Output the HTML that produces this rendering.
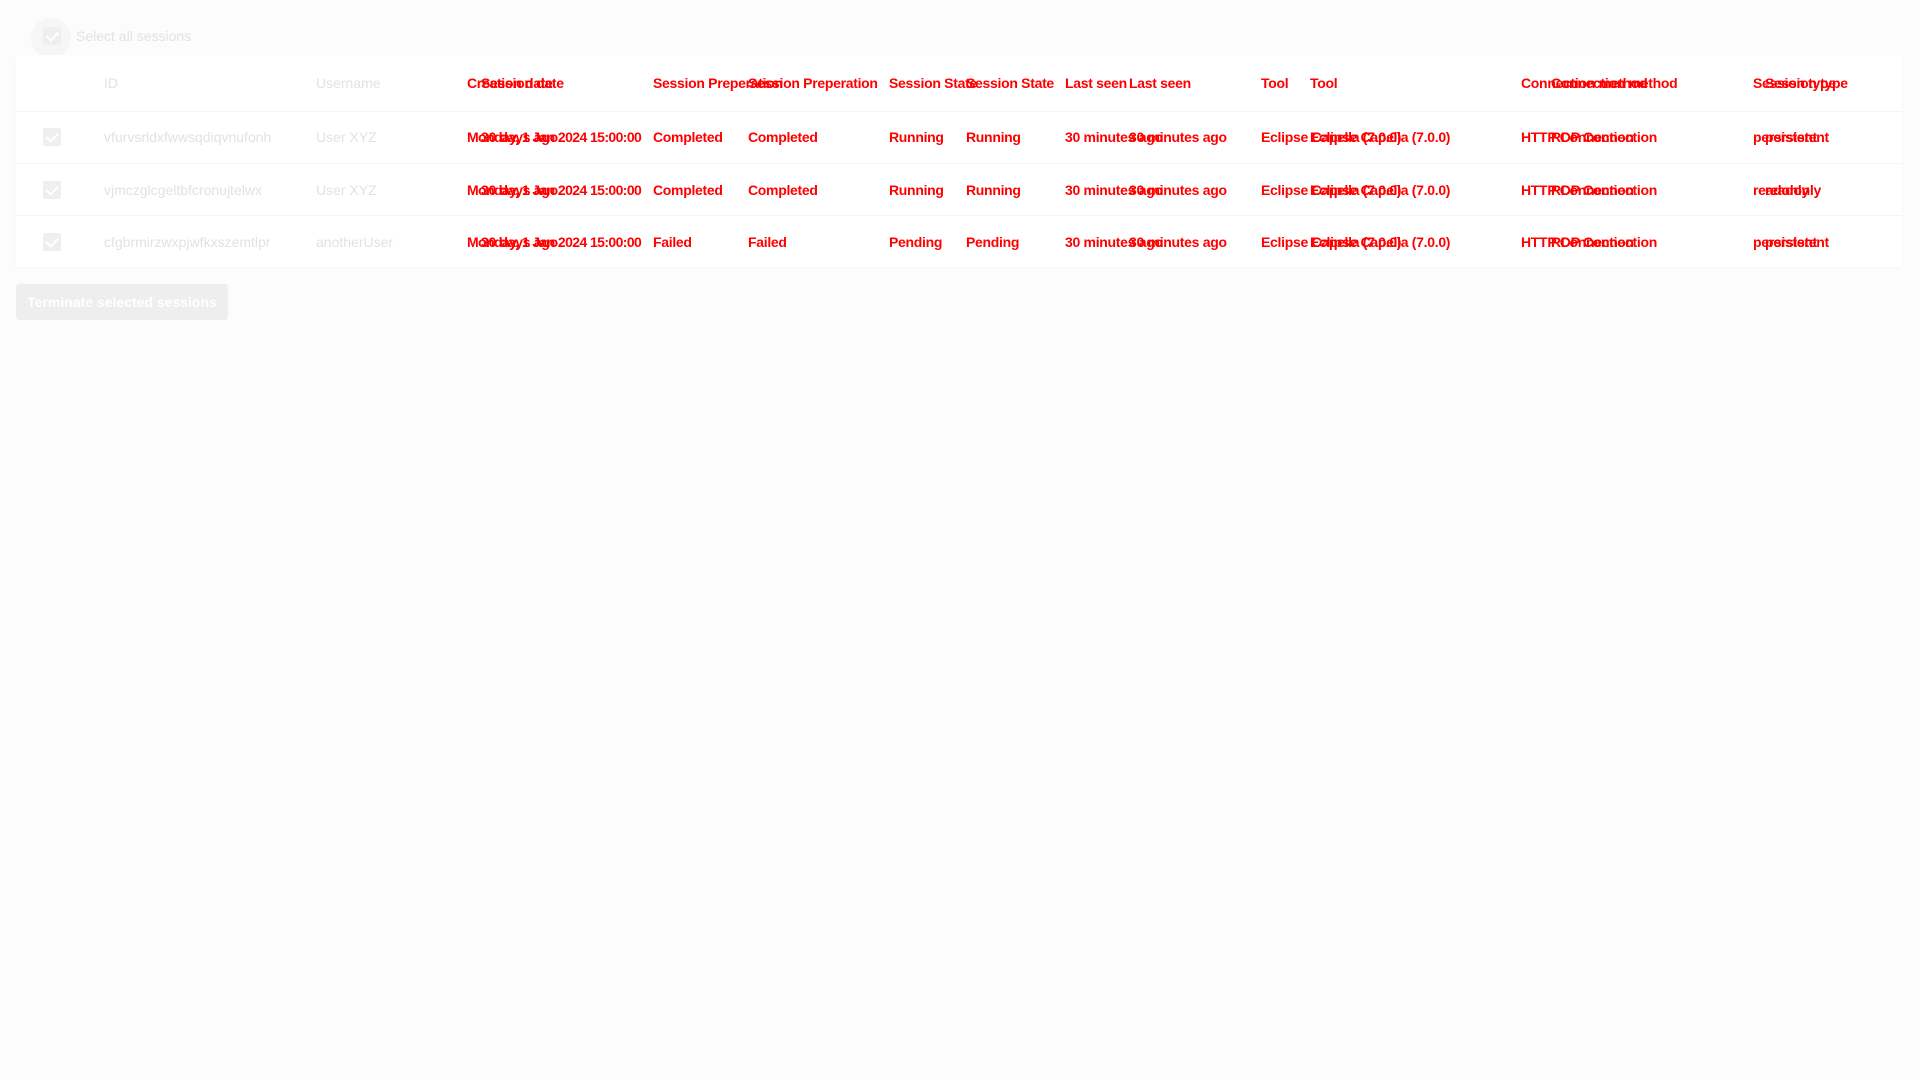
<!DOCTYPE html>
<html><head><meta charset="utf-8"><style>
html,body{margin:0;padding:0;width:1920px;height:1080px;background:#fcfcfc;overflow:hidden;font-family:"Liberation Sans",sans-serif;}
.a{position:absolute;white-space:nowrap;line-height:16px;}
.g{color:#e2e2e2;font-size:14px;}
.r{color:#ff0000;font-size:14px;font-weight:bold;letter-spacing:-0.3px;}
.d{letter-spacing:-0.6px;}
.card{position:absolute;left:16px;top:55px;width:1886px;height:212px;background:#fff;box-shadow:0 2px 4px rgba(0,0,0,0.025);}
.sep{position:absolute;left:16px;width:1886px;height:1px;background:#f5f5f5;}
.cb{position:absolute;left:43px;width:18px;height:18px;border-radius:2px;background:#efefef;}
.cb:after{content:"";position:absolute;left:6px;top:2px;width:5px;height:10px;border:solid #fff;border-width:0 2px 2px 0;transform:rotate(45deg);}
.btn{position:absolute;left:16px;top:284px;width:212px;height:36px;background:#eeeeee;border-radius:3px;color:#fff;font-size:14px;line-height:36px;text-align:center;font-weight:bold;}
</style></head><body>
<div class="a" style="left:31px;top:18px;width:40px;height:40px;border-radius:50%;background:#f6f6f6;"></div>
<div class="cb" style="top:27px"></div>
<div class="a g" style="left:76px;top:28px;">Select all sessions</div>
<div class="card"></div>
<div class="sep" style="top:111px"></div>
<div class="sep" style="top:163px"></div>
<div class="sep" style="top:215px"></div>

<div class="a g" style="left:104px;top:75px;">ID</div>
<div class="a g" style="left:316px;top:75px;">Username</div>
<div class="a r" style="left:467px;top:75px;">Creation date</div>
<div class="a r" style="left:481px;top:75px;">Session date</div>
<div class="a r" style="left:653px;top:75px;">Session Preperation</div>
<div class="a r" style="left:748px;top:75px;">Session Preperation</div>
<div class="a r" style="left:889px;top:75px;">Session State</div>
<div class="a r" style="left:966px;top:75px;">Session State</div>
<div class="a r" style="left:1065px;top:75px;">Last seen</div>
<div class="a r" style="left:1129px;top:75px;">Last seen</div>
<div class="a r" style="left:1261px;top:75px;">Tool</div>
<div class="a r" style="left:1310px;top:75px;">Tool</div>
<div class="a r" style="left:1521px;top:75px;">Connection method</div>
<div class="a r" style="left:1551px;top:75px;">Connection method</div>
<div class="a r" style="left:1753px;top:75px;">Session type</div>
<div class="a r" style="left:1765px;top:75px;">Session type</div>

<div class="cb" style="top:128px"></div>
<div class="a g" style="left:104px;top:129px;">vfurvsrldxfwwsqdiqvnufonh</div>
<div class="a g" style="left:316px;top:129px;">User XYZ</div>
<div class="a r d" style="left:467px;top:129px;">Monday, 1 Jan 2024 15:00:00</div>
<div class="a r" style="left:481px;top:129px;">30 days ago</div>
<div class="a r" style="left:653px;top:129px;">Completed</div>
<div class="a r" style="left:748px;top:129px;">Completed</div>
<div class="a r" style="left:889px;top:129px;">Running</div>
<div class="a r" style="left:966px;top:129px;">Running</div>
<div class="a r" style="left:1065px;top:129px;">30 minutes ago</div>
<div class="a r" style="left:1129px;top:129px;">30 minutes ago</div>
<div class="a r" style="left:1261px;top:129px;">Eclipse Capella (7.0.0)</div>
<div class="a r" style="left:1310px;top:129px;">Eclipse Capella (7.0.0)</div>
<div class="a r" style="left:1521px;top:129px;">HTTP Connection</div>
<div class="a r" style="left:1551px;top:129px;">RDP Connection</div>
<div class="a r" style="left:1753px;top:129px;">persistent</div>
<div class="a r" style="left:1765px;top:129px;">persistent</div>

<div class="cb" style="top:181px"></div>
<div class="a g" style="left:104px;top:182px;">vjmczglcgeltbfcronujtelwx</div>
<div class="a g" style="left:316px;top:182px;">User XYZ</div>
<div class="a r d" style="left:467px;top:182px;">Monday, 1 Jan 2024 15:00:00</div>
<div class="a r" style="left:481px;top:182px;">30 days ago</div>
<div class="a r" style="left:653px;top:182px;">Completed</div>
<div class="a r" style="left:748px;top:182px;">Completed</div>
<div class="a r" style="left:889px;top:182px;">Running</div>
<div class="a r" style="left:966px;top:182px;">Running</div>
<div class="a r" style="left:1065px;top:182px;">30 minutes ago</div>
<div class="a r" style="left:1129px;top:182px;">30 minutes ago</div>
<div class="a r" style="left:1261px;top:182px;">Eclipse Capella (7.0.0)</div>
<div class="a r" style="left:1310px;top:182px;">Eclipse Capella (7.0.0)</div>
<div class="a r" style="left:1521px;top:182px;">HTTP Connection</div>
<div class="a r" style="left:1551px;top:182px;">RDP Connection</div>
<div class="a r" style="left:1753px;top:182px;">readonly</div>
<div class="a r" style="left:1765px;top:182px;">readonly</div>

<div class="cb" style="top:233px"></div>
<div class="a g" style="left:104px;top:234px;">cfgbrmirzwxpjwfkxszemtlpr</div>
<div class="a g" style="left:316px;top:234px;">anotherUser</div>
<div class="a r d" style="left:467px;top:234px;">Monday, 1 Jan 2024 15:00:00</div>
<div class="a r" style="left:481px;top:234px;">30 days ago</div>
<div class="a r" style="left:653px;top:234px;">Failed</div>
<div class="a r" style="left:748px;top:234px;">Failed</div>
<div class="a r" style="left:889px;top:234px;">Pending</div>
<div class="a r" style="left:966px;top:234px;">Pending</div>
<div class="a r" style="left:1065px;top:234px;">30 minutes ago</div>
<div class="a r" style="left:1129px;top:234px;">30 minutes ago</div>
<div class="a r" style="left:1261px;top:234px;">Eclipse Capella (7.0.0)</div>
<div class="a r" style="left:1310px;top:234px;">Eclipse Capella (7.0.0)</div>
<div class="a r" style="left:1521px;top:234px;">HTTP Connection</div>
<div class="a r" style="left:1551px;top:234px;">RDP Connection</div>
<div class="a r" style="left:1753px;top:234px;">persistent</div>
<div class="a r" style="left:1765px;top:234px;">persistent</div>

<div class="btn">Terminate selected sessions</div>
</body></html>
